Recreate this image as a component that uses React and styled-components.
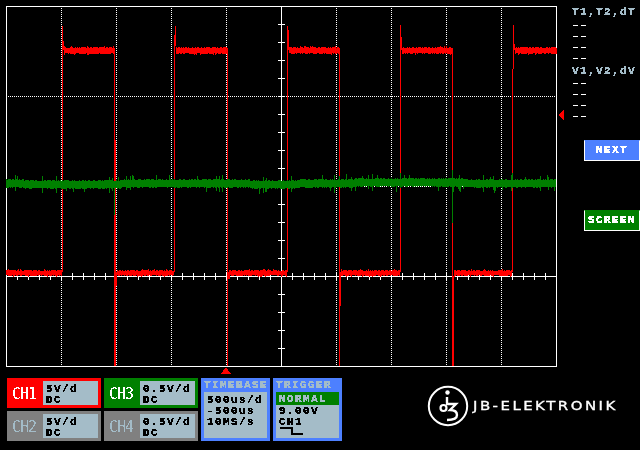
import styled, { createGlobalStyle, css } from "styled-components";

const GlobalStyle = createGlobalStyle`
  html, body {
    margin: 0;
    padding: 0;
    background: #000;
  }
`;

const PANEL = "#a4bcc8";
const BLUE = "#4d80ff";
const GREEN = "#008000";
const RED = "#ff0000";

// alpha threshold gives the text the hard pixel look of the scope's bitmap font
const pixelText = css`
  font-family: "Liberation Mono", monospace;
  font-weight: 700;
  font-size: 11px;
  letter-spacing: 1.4px;
  line-height: 11px;
  white-space: pre;
  filter: url(#crisp);
`;

const Page = styled.div`
  width: 640px;
  height: 450px;
  overflow: hidden;
  display: grid;
  grid-template-columns: 566px 1fr;
  grid-template-rows: 378px 1fr;
`;

const Side = styled.div`
  display: flex;
  flex-direction: column;
  align-items: flex-start;
  padding: 7px 0 0 6px;
`;

const ReadoutTitle = styled.div`
  ${pixelText};
  color: ${PANEL};
  margin-top: ${(p) => p.$top || 0}px;
  margin-bottom: ${(p) => p.$bottom || 0}px;
`;

const ReadoutDash = styled.div`
  ${pixelText};
  color: #fff;
  height: 11px;
`;

const SideButton = styled.div`
  box-sizing: border-box;
  width: 56px;
  height: 21px;
  margin-left: 12px;
  margin-top: ${(p) => p.$top}px;
  border: 1px solid #fff;
  border-top-color: ${(p) => p.$color};
  background: ${(p) => p.$color};
  display: flex;
  align-items: center;
  justify-content: center;
`;

const SideButtonText = styled.span`
  ${pixelText};
  color: #fff;
`;

const Bottom = styled.div`
  grid-column: 1 / 3;
  display: flex;
  align-items: flex-start;
  padding-left: 7px;
  gap: 3px;
`;

const Channels = styled.div`
  display: grid;
  grid-template-columns: 94px 94px;
  grid-template-rows: 30px 30px;
  grid-auto-flow: column;
  gap: 3px;
`;

const Channel = styled.div`
  background: ${(p) => p.$color};
  display: flex;
  align-items: center;
  padding: 3px 3px 3px 5px;
  box-sizing: border-box;
`;

const ChannelName = styled.div`
  width: 31px;
  font-family: "DejaVu Sans Mono", monospace;
  font-size: 15px;
  letter-spacing: -1px;
  transform: scaleY(1.1);
  color: ${(p) => p.$color};
  filter: url(#crisp-thin);
`;

const ChannelInfo = styled.div`
  flex: 1;
  height: 24px;
  background: ${PANEL};
  padding: 3px 0 0 3px;
  box-sizing: border-box;
  color: #000;
`;

const InfoText = styled.div`
  ${pixelText};
  color: #000;
`;

const InfoBox = styled.div`
  width: 69px;
  height: 63px;
  box-sizing: border-box;
  padding: 0 3px 3px;
  background: ${BLUE};
  display: flex;
  flex-direction: column;
`;

const InfoTitle = styled.div`
  ${pixelText};
  color: ${PANEL};
  height: 14px;
  padding-top: 2px;
  box-sizing: border-box;
`;

const InfoBody = styled.div`
  flex: 1;
  background: ${PANEL};
`;

const InfoLines = styled(InfoText)`
  padding: ${(p) => p.$top}px 0 0 3px;
`;

const Mode = styled.div`
  background: ${GREEN};
  height: 13px;
  padding: 2px 0 0 3px;
  box-sizing: border-box;
`;

const ModeText = styled.div`
  ${pixelText};
  color: ${PANEL};
`;

const SlopeIcon = styled.svg`
  display: block;
  margin: -1px 0 0 3px;
`;

const Logo = styled.div`
  display: flex;
  align-items: center;
  margin: 7px 0 0 82px;
`;

const LogoText = styled.span`
  font-family: "DejaVu Sans", sans-serif;
  font-size: 11.5px;
  letter-spacing: 1.9px;
  -webkit-text-stroke: 0.3px #fff;
  color: #fff;
  margin-left: 4px;
  white-space: nowrap;
  transform: scaleX(1.3);
  transform-origin: left center;
`;

const HiddenDefs = styled.svg`
  display: block;
  width: 0;
  height: 0;
`;

const Scope = styled.svg`
  display: block;
`;

const CHANNELS = [
  { name: "CH1", value: "5V/d", bg: RED, fg: "#fff" },
  { name: "CH2", value: "5V/d", bg: "#808080", fg: PANEL },
  { name: "CH3", value: "0.5V/d", bg: GREEN, fg: "#fff" },
  { name: "CH4", value: "0.5V/d", bg: "#808080", fg: PANEL },
];

const DIVS = [61, 116, 171, 226, 336, 391, 446, 501];

// edges of the square wave: [x, from y, to y]
const RED_EDGES = [
  [62, 26, 272], [63, 41, 50], [114, 50, 366], [115, 140, 366], [116, 272, 286],
  [174, 35, 272], [175, 26, 46], [227, 50, 366], [228, 272, 279], [229, 272, 279],
  [287, 26, 272], [288, 30, 50], [339, 50, 366], [340, 272, 306],
  [400, 25, 272], [401, 37, 50], [452, 50, 366], [453, 276, 366],
  [513, 25, 69], [512, 69, 272], [514, 44, 50],
];

const HIGH = [[64, 114], [176, 227], [289, 339], [402, 452], [515, 556]];
const LOW = [[6, 61], [117, 173], [229, 286], [341, 399], [454, 511]];

const GREEN_SPIKES = [[114, 187, 215], [452, 170, 223], [400, 173, 188], [512, 173, 188]];

function makeRandom(seed) {
  let s = seed;
  return () => {
    s = (s + 0x6d2b79f5) | 0;
    let t = Math.imul(s ^ (s >>> 15), 1 | s);
    t = (t + Math.imul(t ^ (t >>> 7), 61 | t)) ^ t;
    return ((t ^ (t >>> 14)) >>> 0) / 4294967296;
  };
}

function redTrace() {
  const rand = makeRandom(7);
  let d = "";
  const band = (x, top, bottom) => {
    const up = rand() < 0.1 ? 1 : 0;
    const down = rand() < 0.1 ? 1 : 0;
    const y1 = top + (rand() < 0.4 ? 1 : 0) - up;
    const y2 = bottom - (rand() < 0.4 ? 1 : 0) + down;
    d += `M${x + 0.5} ${y1}V${y2}`;
  };
  HIGH.forEach(([a, b]) => {
    for (let x = a; x <= b; x++) band(x, 47, 54);
  });
  LOW.forEach(([a, b]) => {
    for (let x = a; x <= b; x++) band(x, 270, 276);
  });
  RED_EDGES.forEach(([x, a, b]) => {
    d += `M${x + 0.5} ${a}V${b}`;
  });
  return d;
}

function greenTrace() {
  const rand = makeRandom(21);
  let d = "";
  for (let x = 6; x < 556; x++) {
    const wander = Math.round(Math.sin(x / 37) * 0.6 + Math.sin(x / 91) * 0.6);
    const spike = rand() < 0.15 ? 3 + Math.floor(rand() * 3) : 0;
    const y1 = 179 + wander + Math.floor(rand() * 2) - (rand() < 0.5 ? spike : 0);
    const y2 = 188 + wander - Math.floor(rand() * 2) + (rand() < 0.5 ? spike : 0);
    d += `M${x + 0.5} ${y1}V${y2}`;
  }
  GREEN_SPIKES.forEach(([x, a, b]) => {
    d += `M${x + 0.5} ${a}V${b}`;
  });
  return d;
}

function ScopeScreen() {
  const xTicks = [];
  for (let x = 17; x < 556; x += 11) xTicks.push(x);
  const yTicks = [];
  for (let y = 24; y < 366; y += 18) yTicks.push(y);

  return (
    <Scope width="566" height="378" viewBox="0 0 566 378" shapeRendering="crispEdges">
      <g stroke="#fff" strokeDasharray="1 1">
        {DIVS.map((x) => (
          <line key={x} x1={x + 0.5} y1="8" x2={x + 0.5} y2="366" />
        ))}
        <line x1="8" y1="96.5" x2="556" y2="96.5" />
        <line x1="8" y1="186.5" x2="556" y2="186.5" />
      </g>
      <g stroke="#fff">
        <rect x="6.5" y="6.5" width="550" height="360" fill="none" />
        <line x1="6" y1="276.5" x2="557" y2="276.5" />
        <line x1="281.5" y1="6" x2="281.5" y2="367" />
        {xTicks.map((x) => (
          <line key={x} x1={x + 0.5} y1="273" x2={x + 0.5} y2="280" />
        ))}
        {yTicks.map((y) => (
          <line key={y} x1="278" y1={y + 0.5} x2="285" y2={y + 0.5} />
        ))}
      </g>
      <path d={redTrace()} stroke={RED} fill="none" />
      <path d={greenTrace()} stroke={GREEN} fill="none" />
      <polygon points="558,115 564,109 564,121" fill={RED} />
      <polygon points="221,374 226,367 231,374" fill={RED} />
    </Scope>
  );
}

function Readout({ title, top, bottom }) {
  return (
    <>
      <ReadoutTitle $top={top} $bottom={bottom}>
        {title}
      </ReadoutTitle>
      {[0, 1, 2, 3].map((i) => (
        <ReadoutDash key={i}>––</ReadoutDash>
      ))}
    </>
  );
}

function JbLogo() {
  return (
    <svg width="42" height="42" viewBox="0 0 42 42" fill="none" stroke="#fff">
      <circle cx="21" cy="21" r="19.2" strokeWidth="2" />
      <circle cx="20.5" cy="7.5" r="2.2" fill="#fff" stroke="none" />
      <path d="M20 12V18.5" strokeWidth="2.4" />
      <circle cx="16.5" cy="23" r="3" strokeWidth="2.2" />
      <path d="M19 19H29L23 25C29 25 30 28 30 30C30 33 27 35 20 35" strokeWidth="2.4" />
    </svg>
  );
}

export default function App() {
  return (
    <>
      <GlobalStyle />
      <HiddenDefs aria-hidden="true">
        <filter id="crisp" x="-5%" y="-20%" width="110%" height="140%">
          <feComponentTransfer>
            <feFuncA type="discrete" tableValues="0 1 1 1" />
          </feComponentTransfer>
        </filter>
        <filter id="crisp-thin" x="-5%" y="-20%" width="110%" height="140%">
          <feComponentTransfer>
            <feFuncA type="discrete" tableValues="0 1" />
          </feComponentTransfer>
        </filter>
      </HiddenDefs>
      <Page>
        <ScopeScreen />
        <Side>
          <Readout title="T1,T2,dT" bottom={2} />
          <Readout title="V1,V2,dV" top={2} bottom={1} />
          <SideButton $top={18} $color={BLUE}>
            <SideButtonText>NEXT</SideButtonText>
          </SideButton>
          <SideButton $top={49} $color={GREEN}>
            <SideButtonText>SCREEN</SideButtonText>
          </SideButton>
        </Side>
        <Bottom>
          <Channels>
            {CHANNELS.map((c) => (
              <Channel key={c.name} $color={c.bg}>
                <ChannelName $color={c.fg}>{c.name}</ChannelName>
                <ChannelInfo>
                  <InfoText>
                    {c.value}
                    {"\n"}DC
                  </InfoText>
                </ChannelInfo>
              </Channel>
            ))}
          </Channels>
          <InfoBox>
            <InfoTitle>TIMEBASE</InfoTitle>
            <InfoBody>
              <InfoLines $top={3}>
                500us/d{"\n"}-500us{"\n"}10MS/s
              </InfoLines>
            </InfoBody>
          </InfoBox>
          <InfoBox>
            <InfoTitle>TRIGGER</InfoTitle>
            <InfoBody>
              <Mode>
                <ModeText>NORMAL</ModeText>
              </Mode>
              <InfoLines $top={1}>
                9.00V{"\n"}CH1
              </InfoLines>
              <SlopeIcon width="26" height="9" viewBox="0 0 26 9" shapeRendering="crispEdges">
                <path d="M1 1H13V7H24" fill="none" stroke="#000" strokeWidth="2" />
              </SlopeIcon>
            </InfoBody>
          </InfoBox>
          <Logo>
            <JbLogo />
            <LogoText>JB-ELEKTRONIK</LogoText>
          </Logo>
        </Bottom>
      </Page>
    </>
  );
}
